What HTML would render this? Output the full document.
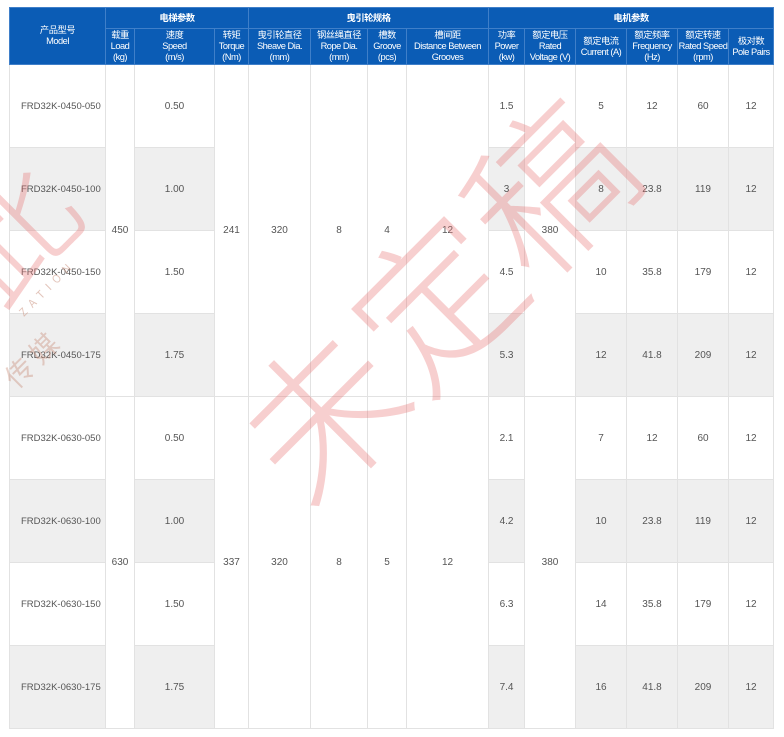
<!DOCTYPE html>
<html><head><meta charset="utf-8"><style>
body{margin:0;width:784px;height:737px;background:#fff;overflow:hidden;position:relative;font-family:"Liberation Sans","Noto Sans CJK SC",sans-serif;}
table{position:absolute;left:9px;top:7px;border-collapse:collapse;table-layout:fixed;width:764px;}
th{background:#0b5cb5;color:#fff;font-weight:normal;font-size:9.3px;line-height:11px;border:1px solid #3f7fc9;padding:0;text-align:center;letter-spacing:-0.5px;white-space:nowrap;overflow:hidden}
tr.h1 th{height:20px}
th.g{font-weight:bold;}
tr.h2 th{height:35px;}
td{height:82px;border:1px solid #e2e2e2;text-align:center;font-size:10px;color:#555;padding:0;background:#fff}
tr.gr td.v{background:#efefef}
td.m{text-align:left;padding-left:11px;font-size:9.5px}
.wm{position:absolute;pointer-events:none;color:rgba(232,110,110,0.33);font-family:"Noto Sans CJK SC",sans-serif;white-space:nowrap}
</style></head><body>
<table>
<colgroup><col style="width:96px"><col style="width:29px"><col style="width:80px"><col style="width:34px"><col style="width:62px"><col style="width:57px"><col style="width:39px"><col style="width:82px"><col style="width:36px"><col style="width:51px"><col style="width:51px"><col style="width:51px"><col style="width:51px"><col style="width:45px"></colgroup>
<tr class="h1"><th rowspan="2">产品型号<br>Model</th><th class="g" colspan="3">电梯参数</th><th class="g" colspan="4">曳引轮规格</th><th class="g" colspan="6">电机参数</th></tr>
<tr class="h2"><th>载重<br>Load<br>(kg)</th><th>速度<br>Speed<br>(m/s)</th><th>转矩<br>Torque<br>(Nm)</th><th>曳引轮直径<br>Sheave Dia.<br>(mm)</th><th>钢丝绳直径<br>Rope Dia.<br>(mm)</th><th>槽数<br>Groove<br>(pcs)</th><th>槽间距<br>Distance Between<br>Grooves</th><th>功率<br>Power<br>(kw)</th><th>额定电压<br>Rated<br>Voltage (V)</th><th>额定电流<br>Current (A)</th><th>额定频率<br>Frequency<br>(Hz)</th><th>额定转速<br>Rated Speed<br>(rpm)</th><th>极对数<br>Pole Pairs</th></tr>
<tr><td class="m v">FRD32K-0450-050</td><td rowspan="4">450</td><td class="v">0.50</td><td rowspan="4">241</td><td rowspan="4">320</td><td rowspan="4">8</td><td rowspan="4">4</td><td rowspan="4">12</td><td class="v">1.5</td><td rowspan="4">380</td><td class="v">5</td><td class="v">12</td><td class="v">60</td><td class="v">12</td></tr>
<tr class="gr"><td class="m v">FRD32K-0450-100</td><td class="v">1.00</td><td class="v">3</td><td class="v">8</td><td class="v">23.8</td><td class="v">119</td><td class="v">12</td></tr>
<tr><td class="m v">FRD32K-0450-150</td><td class="v">1.50</td><td class="v">4.5</td><td class="v">10</td><td class="v">35.8</td><td class="v">179</td><td class="v">12</td></tr>
<tr class="gr"><td class="m v">FRD32K-0450-175</td><td class="v">1.75</td><td class="v">5.3</td><td class="v">12</td><td class="v">41.8</td><td class="v">209</td><td class="v">12</td></tr>
<tr><td class="m v">FRD32K-0630-050</td><td rowspan="4">630</td><td class="v">0.50</td><td rowspan="4">337</td><td rowspan="4">320</td><td rowspan="4">8</td><td rowspan="4">5</td><td rowspan="4">12</td><td class="v">2.1</td><td rowspan="4">380</td><td class="v">7</td><td class="v">12</td><td class="v">60</td><td class="v">12</td></tr>
<tr class="gr"><td class="m v">FRD32K-0630-100</td><td class="v">1.00</td><td class="v">4.2</td><td class="v">10</td><td class="v">23.8</td><td class="v">119</td><td class="v">12</td></tr>
<tr><td class="m v">FRD32K-0630-150</td><td class="v">1.50</td><td class="v">6.3</td><td class="v">14</td><td class="v">35.8</td><td class="v">179</td><td class="v">12</td></tr>
<tr class="gr"><td class="m v">FRD32K-0630-175</td><td class="v">1.75</td><td class="v">7.4</td><td class="v">16</td><td class="v">41.8</td><td class="v">209</td><td class="v">12</td></tr>
</table>
<div class="wm" style="left:190px;top:215px;font-size:160px;line-height:160px;transform:rotate(-45deg);transform-origin:50% 50%;font-weight:300">未定稿</div>
<div class="wm" style="left:-60px;top:160px;font-size:130px;line-height:130px;transform:rotate(-45deg);font-weight:300">此</div>
<div class="wm" style="left:0px;top:340px;font-size:28px;transform:rotate(-45deg);color:rgba(200,140,120,0.4)">传 媒</div>
<div class="wm" style="left:10px;top:280px;font-size:11px;letter-spacing:6px;transform:rotate(-45deg);color:rgba(200,140,120,0.5)">ZATION</div>
</body></html>
